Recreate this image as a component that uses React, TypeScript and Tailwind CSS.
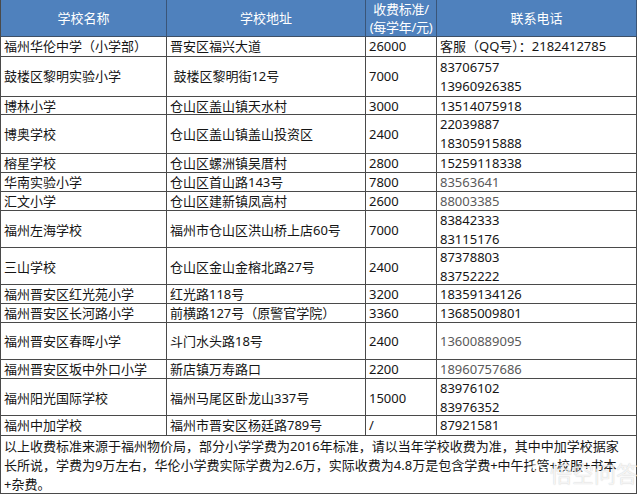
import React from "react";

type Row = {
  name: string;
  addr: string;
  fee: string;
  phones: string[];
  gray?: boolean;
  h: string;
};

const rows: Row[] = [
  { name: "福州华伦中学（小学部）", addr: "晋安区福兴大道", fee: "26000", phones: ["客服（QQ号）：2182412785"], h: "h-[20px]" },
  { name: "鼓楼区黎明实验小学", addr: "\u00a0鼓楼区黎明街12号", fee: "7000", phones: ["83706757", "13960926385"], h: "h-[40px]" },
  { name: "博林小学", addr: "仓山区盖山镇天水村", fee: "3000", phones: ["13514075918"], h: "h-[18px]" },
  { name: "博奥学校", addr: "仓山区盖山镇盖山投资区", fee: "2400", phones: ["22039887", "18305915888"], h: "h-[39px]" },
  { name: "榕星学校", addr: "仓山区螺洲镇吴厝村", fee: "2800", phones: ["15259118338"], h: "h-[19px]" },
  { name: "华南实验小学", addr: "仓山区首山路143号", fee: "7800", phones: ["83563641"], gray: true, h: "h-[19px]" },
  { name: "汇文小学", addr: "仓山区建新镇凤高村", fee: "2600", phones: ["88003385"], gray: true, h: "h-[19px]" },
  { name: "福州左海学校", addr: "福州市仓山区洪山桥上店60号", fee: "7000", phones: ["83842333", "83115176"], h: "h-[37px]" },
  { name: "三山学校", addr: "仓山区金山金榕北路27号", fee: "2400", phones: ["87378803", "83752222"], h: "h-[37px]" },
  { name: "福州晋安区红光苑小学", addr: "红光路118号", fee: "3200", phones: ["18359134126"], h: "h-[19px]" },
  { name: "福州晋安区长河路小学", addr: "前横路127号（原警官学院）", fee: "3360", phones: ["13685009801"], h: "h-[19px]" },
  { name: "福州晋安区春晖小学", addr: "斗门水头路18号", fee: "2400", phones: ["13600889095"], gray: true, h: "h-[37px]" },
  { name: "福州晋安区坂中外口小学", addr: "新店镇万寿路口", fee: "2200", phones: ["18960757686"], gray: true, h: "h-[19px]" },
  { name: "福州阳光国际学校", addr: "福州马尾区卧龙山337号", fee: "15000", phones: ["83976102", "83976352"], h: "h-[37px]" },
  { name: "福州中加学校", addr: "福州市晋安区杨廷路789号", fee: "/", phones: ["87921581"], h: "h-[20px]" },
];

const font = "font-['Noto_Sans','Noto_Sans_CJK_SC',sans-serif]";

export default function App() {
  return (
    <div className={`relative w-[640px] h-[497px] bg-white overflow-hidden ${font} text-[13px] leading-[19px] text-[#151515]`}>
      <div className="w-[637px] border-l border-[#4a4a4a]">
        {/* header */}
        <div className="grid grid-cols-[166px_199px_71px_200px] h-[37px] bg-[#4f81bd] text-white border-b border-[#3d4f66]">
          <div className="flex items-center justify-center border-r border-[#3a5578]">学校名称</div>
          <div className="flex items-center justify-center border-r border-[#3a5578]">学校地址</div>
          <div className="flex flex-col items-center justify-center border-r border-[#3a5578] leading-[18px] tracking-[-0.3px]">
            <span>收费标准/</span>
            <span>(每学年/元)</span>
          </div>
          <div className="flex items-center justify-center border-r border-[#3a5578]">联系电话</div>
        </div>
        {rows.map((r, i) => (
          <div key={i} className={`grid grid-cols-[166px_199px_71px_200px] ${r.h} border-b border-[#4a4a4a]`}>
            <div className="flex items-center pl-[3px] border-r border-[#4a4a4a] whitespace-nowrap overflow-hidden">{r.name}</div>
            <div className="flex items-center pl-[3px] border-r border-[#4a4a4a] whitespace-nowrap overflow-hidden">{r.addr}</div>
            <div className="flex items-center pl-[3px] border-r border-[#4a4a4a]">{r.fee}</div>
            <div className={`flex flex-col justify-center pl-[3px] border-r border-[#4a4a4a] whitespace-nowrap ${r.gray ? "text-[#5a5a5a]" : ""}`}>
              {r.phones.map((p, j) => (
                <span key={j}>{p}</span>
              ))}
            </div>
          </div>
        ))}
        {/* footer */}
        <div className="h-[58px] border-b border-r border-[#4a4a4a] pl-[3px] pt-[1px] leading-[19px] whitespace-nowrap">
          <div>以上收费标准来源于福州物价局，部分小学学费为2016年标准，请以当年学校收费为准，其中中加学校据家</div>
          <div>长所说，学费为9万左右，华伦小学费实际学费为2.6万，实际收费为4.8万是包含学费+中午托管+校服+书本</div>
          <div>+杂费。</div>
        </div>
      </div>
      {/* watermark */}
      <div className="absolute left-[527px] top-[460px] flex items-center gap-[3px] text-white/80 text-[22px] leading-[26px] [text-shadow:0_0_1px_rgba(0,0,0,0.25)]">
        <svg width="20" height="20" viewBox="0 0 20 20" className="opacity-80">
          <circle cx="10" cy="10" r="8" fill="none" stroke="white" strokeWidth="2" />
          <circle cx="10" cy="10" r="3" fill="white" />
        </svg>
        <span>悟空问答</span>
      </div>
    </div>
  );
}
